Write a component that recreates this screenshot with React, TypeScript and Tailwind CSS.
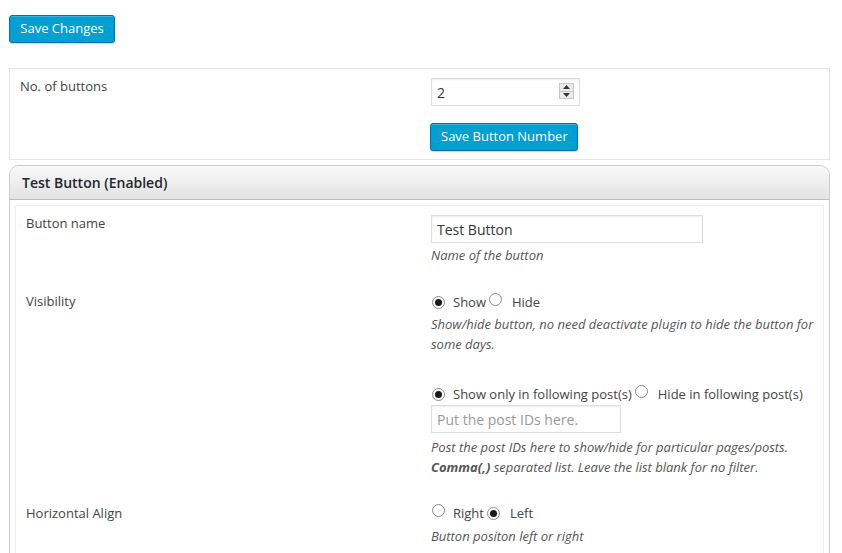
import React, { useState } from "react";

const font = { fontFamily: '"Open Sans", "Noto Sans", sans-serif' };

const Radio = ({ checked, onClick }: { checked: boolean; onClick: () => void }) => (
  <span
    onClick={onClick}
    className="inline-flex items-center justify-center w-[13px] h-[13px] rounded-full border border-[#8a8a8a] bg-white shrink-0 cursor-pointer"
  >
    {checked && <span className="w-[7px] h-[7px] rounded-full bg-[#1a1a1a]" />}
  </span>
);

const Spinner = () => (
  <span className="absolute right-[6px] top-[5px] w-[15px] h-[16px] flex flex-col border border-[#c8c8c8] bg-[#eaeaea]">
    <span className="flex-1 flex items-center justify-center border-b border-[#c8c8c8]">
      <svg width="7" height="4" viewBox="0 0 7 4"><path d="M0 4 L3.5 0 L7 4 Z" fill="#333" /></svg>
    </span>
    <span className="flex-1 flex items-center justify-center">
      <svg width="7" height="4" viewBox="0 0 7 4"><path d="M0 0 L3.5 4 L7 0 Z" fill="#333" /></svg>
    </span>
  </span>
);

export default function App() {
  const [count, setCount] = useState("2");
  const [name, setName] = useState("Test Button");
  const [visible, setVisible] = useState(true);
  const [onlyIn, setOnlyIn] = useState(true);
  const [left, setLeft] = useState(true);

  const blueBtn =
    "h-[28px] px-[10px] rounded-[3px] border border-[#0073aa] bg-[#00a0d2] text-white text-[13px] whitespace-nowrap shadow-[inset_0_1px_0_rgba(120,200,230,0.5),0_1px_0_rgba(0,0,0,0.15)]";
  const desc = "text-[13px] leading-[20px] italic text-[#555]";
  const label = "text-[13px] leading-[20px] text-[#444] shrink-0";

  return (
    <div style={font} className="w-[842px] h-[553px] overflow-hidden bg-white px-[9px] pt-[15px]">
      <button className={`${blueBtn} w-[106px]`}>Save Changes</button>

      <div className="mt-[25px] w-[821px] border border-[#e5e5e5] flex px-[10px] pt-[7px] pb-[8px]">
        <div className={`${label} w-[411px]`}>No. of buttons</div>
        <div className="flex flex-col items-start pt-[2px]">
          <div className="relative">
            <input
              value={count}
              onChange={(e) => setCount(e.target.value)}
              className="w-[149px] h-[28px] border border-[#ddd] px-[5px] text-[14px] text-[#32373c] outline-none shadow-[inset_0_1px_2px_rgba(0,0,0,0.07)]"
            />
            <Spinner />
          </div>
          <button className={`${blueBtn} mt-[17px] -ml-[1px] w-[148px]`}>Save Button Number</button>
        </div>
      </div>

      <div className="mt-[5px] w-[821px] border border-[#ccc] rounded-t-[10px]">
        <div className="h-[34px] flex items-center px-[12px] rounded-t-[10px] bg-gradient-to-b from-[#f9f9f9] to-[#e3e3e3] border-b border-[#bbb]">
          <span className="text-[14px] font-semibold text-[#23282d]">Test Button (Enabled)</span>
        </div>
        <div className="px-[5px] pt-[5px]">
          <div className="border border-[#eee] px-[10px] pt-[7px] pb-[20px]">
            <div className="flex">
              <div className={`${label} w-[405px]`}>Button name</div>
              <div className="flex flex-col pt-[2px]">
                <input
                  value={name}
                  onChange={(e) => setName(e.target.value)}
                  className="w-[272px] h-[28px] border border-[#ddd] px-[5px] text-[14px] text-[#32373c] outline-none shadow-[inset_0_1px_2px_rgba(0,0,0,0.07)]"
                />
                <div className={`${desc} mt-[2px]`}>Name of the button</div>
              </div>
            </div>

            <div className="flex mt-[26px]">
              <div className={`${label} w-[405px]`}>Visibility</div>
              <div className="flex flex-col pt-[1px]">
                <div className="flex items-center h-[20px] text-[13px] text-[#444]">
                  <span className="ml-[1px]"><Radio checked={visible} onClick={() => setVisible(true)} /></span>
                  <span className="ml-[8px] mt-[2px]">Show</span>
                  <span className="ml-[3px]"><Radio checked={!visible} onClick={() => setVisible(false)} /></span>
                  <span className="ml-[10px] mt-[2px]">Hide</span>
                </div>
                <div className={`${desc} w-[390px] mt-[2px]`}>
                  Show/hide button, no need deactivate plugin to hide the button for some days.
                </div>

                <div className="flex items-center h-[20px] mt-[30px] text-[13px] text-[#444]">
                  <span className="ml-[1px]"><Radio checked={onlyIn} onClick={() => setOnlyIn(true)} /></span>
                  <span className="ml-[8px] mt-[2px]">Show only in following post(s)</span>
                  <span className="ml-[3px]"><Radio checked={!onlyIn} onClick={() => setOnlyIn(false)} /></span>
                  <span className="ml-[10px] mt-[2px]">Hide in following post(s)</span>
                </div>
                <input
                  placeholder="Put the post IDs here."
                  className="mt-[1px] w-[190px] h-[28px] border border-[#ddd] px-[5px] text-[14px] text-[#32373c] placeholder:text-[#999] outline-none shadow-[inset_0_1px_2px_rgba(0,0,0,0.07)]"
                />
                <div className={`${desc} mt-[4px]`}>
                  Post the post IDs here to show/hide for particular pages/posts.
                  <br />
                  <b className="font-bold">Comma(,)</b> separated list. Leave the list blank for no filter.
                </div>
              </div>
            </div>

            <div className="flex mt-[26px]">
              <div className={`${label} w-[405px]`}>Horizontal Align</div>
              <div className="flex flex-col">
                <div className="flex items-center h-[20px] text-[13px] text-[#444]">
                  <span className="ml-[1px]"><Radio checked={!left} onClick={() => setLeft(false)} /></span>
                  <span className="ml-[8px] mt-[2px]">Right</span>
                  <span className="ml-[3px]"><Radio checked={left} onClick={() => setLeft(true)} /></span>
                  <span className="ml-[10px] mt-[2px]">Left</span>
                </div>
                <div className={`${desc} mt-[3px]`}>Button positon left or right</div>
              </div>
            </div>
          </div>
        </div>
      </div>
    </div>
  );
}
